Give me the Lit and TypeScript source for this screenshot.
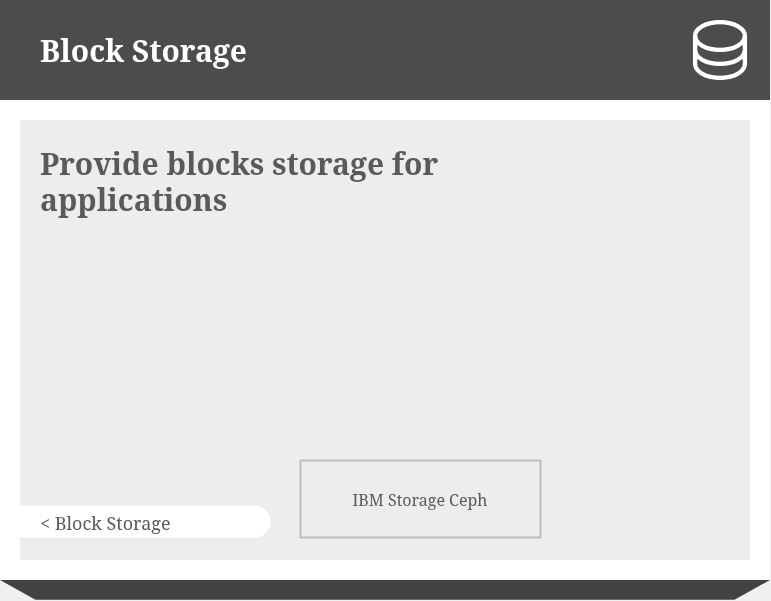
import { LitElement, html, css } from "lit";
import { customElement } from "lit/decorators.js";

@customElement("app-root")
export class AppRoot extends LitElement {
  static styles = css`
    :host {
      display: block;
      width: 771px;
      height: 601px;
      overflow: hidden;
      background: #f0f0f0;
      color: #5a5a5a;
      font-family: "Noto Serif", serif;
    }
    .page {
      width: 770px;
      height: 580px;
      background: #fff;
    }
    header {
      box-sizing: border-box;
      display: flex;
      align-items: center;
      justify-content: space-between;
      height: 100px;
      padding: 0 20px 0 40px;
      background: #4c4c4c;
      color: #fff;
    }
    h1,
    h2 {
      margin: 0;
      font-size: 30px;
      font-weight: 700;
    }
    h1,
    h2,
    .label {
      will-change: transform;
    }
    h2 {
      width: 420px;
      line-height: 36px;
    }
    .icon {
      display: block;
      width: 60px;
      height: 60px;
      fill: none;
      stroke: #fff;
      stroke-width: 4.3;
    }
    .panel {
      box-sizing: border-box;
      display: flex;
      flex-direction: column;
      justify-content: space-between;
      height: 440px;
      margin: 20px;
      padding: 26px 20px 21px;
      background: #ededed;
    }
    .actions {
      display: flex;
      align-items: flex-end;
      gap: 28px;
      margin-left: -20px;
    }
    .back {
      position: relative;
      width: 251px;
      height: 34px;
      font-size: 18px;
      line-height: 36px;
    }
    .product {
      position: relative;
      width: 242px;
      height: 80px;
      font-size: 16px;
      line-height: 83px;
      text-align: center;
    }
    .shape {
      position: absolute;
      top: 0;
      left: 0;
    }
    .label {
      position: relative;
      display: block;
    }
    .back .label {
      padding-left: 20px;
    }
    .foot {
      display: block;
    }
  `;

  render() {
    return html`
      <div class="page">
        <header>
          <h1>Block Storage</h1>
          <svg class="icon" viewBox="0 0 60 60">
            <ellipse cx="30" cy="16" rx="24.9" ry="13.9" />
            <path d="M5.1 16V44A24.9 13.9 0 0 0 54.9 44V16" />
            <path d="M5.1 30A24.9 13.9 0 0 0 54.9 30" />
          </svg>
        </header>
        <main class="panel">
          <h2>Provide blocks storage for applications</h2>
          <div class="actions">
            <div class="back">
              <svg class="shape" width="251" height="34" viewBox="0 0 251 34">
                <path d="M0 .4H234.5A16.1 16.1 0 0 1 234.5 32.6H0Z" fill="#fff" />
              </svg>
              <span class="label">&lt; Block Storage</span>
            </div>
            <div class="product">
              <svg class="shape" width="243" height="80" viewBox="0 0 243 80">
                <rect x="1.5" y="1.5" width="240" height="77" fill="none" stroke="#bebebe" stroke-width="2" />
              </svg>
              <span class="label">IBM Storage Ceph</span>
            </div>
          </div>
        </main>
      </div>
      <svg class="foot" width="771" height="21" viewBox="0 0 771 21">
        <path d="M0 0H770L734.5 19.7H35.5Z" fill="#424242" />
      </svg>
    `;
  }
}
